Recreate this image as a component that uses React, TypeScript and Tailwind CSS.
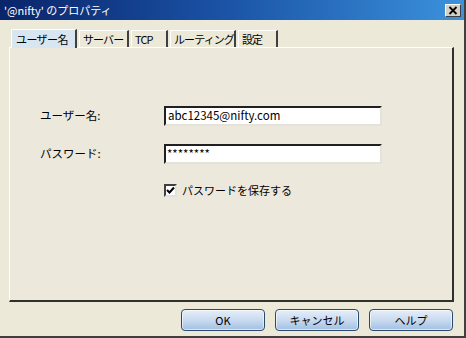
import React from "react";

const font = { fontFamily: '"Noto Sans CJK JP", "Liberation Sans", sans-serif' };

function Tab({ label, selected, w }: { label: string; selected?: boolean; w: string }) {
  if (selected) {
    return (
      <div className={`relative z-10 -mb-[1px] ml-[2px] flex h-[19px] shrink-0 items-center whitespace-nowrap border-l border-t border-l-white border-t-white border-r-2 border-r-[#404040] bg-[#d8e6f2] pl-[4px] text-[11px] leading-none tracking-[-0.6px] text-black ${w}`}>
        {label}
      </div>
    );
  }
  return (
    <div className={`flex h-[17px] shrink-0 items-center whitespace-nowrap border-l border-t border-l-white border-t-white border-r-2 border-r-[#404040] pl-[3px] text-[11px] leading-none tracking-[-0.9px] text-black ${w}`}>
      {label}
    </div>
  );
}

function Btn({ label }: { label: string }) {
  return (
    <div className="flex h-[22px] w-[84px] items-center justify-center rounded-[4px] border border-[#2c4a6e] bg-gradient-to-b from-[#e6eef9] via-[#c9dbf0] to-[#a3bfe2] text-[11px] leading-none text-black shadow-[inset_0_0_0_1px_rgba(255,255,255,0.6)]">
      {label}
    </div>
  );
}

export default function App() {
  return (
    <div
      className="flex h-[338px] w-[466px] flex-col overflow-hidden border-b-2 border-r-2 border-b-[#404040] border-r-[#404040] bg-[#ece9d8]"
      style={font}
    >
      {/* Title bar */}
      <div className="flex h-[20px] shrink-0 items-center justify-between bg-gradient-to-r from-[#0a246a] via-[#1c55a8] to-[#3c92dc] pl-[4px] pr-[3px]">
        <span className="text-[11px] leading-none text-white">'@nifty' のプロパティ</span>
        <div className="flex h-[13px] w-[16px] items-center justify-center border border-b-[#404040] border-l-white border-r-[#404040] border-t-white bg-[#d4d0c8]">
          <svg width="10" height="9" viewBox="0 0 10 9">
            <path d="M1.5 1 L8.5 8 M8.5 1 L1.5 8" stroke="#000" strokeWidth="1.8" />
          </svg>
        </div>
      </div>

      {/* Body */}
      <div className="flex flex-1 flex-col pl-[9px] pr-[10px] pt-[9px]">
        {/* Tabs */}
        <div className="flex h-[18px] items-end gap-[2px]">
          <Tab label="ユーザー名" selected w="w-[66px]" />
          <Tab label="サーバー" w="w-[50px]" />
          <Tab label="TCP" w="w-[37px]" />
          <Tab label="ルーティング" w="w-[66px]" />
          <Tab label="設定" w="w-[40px]" />
        </div>

        {/* Panel */}
        <div className="h-[255px] border-b-2 border-l border-r-2 border-t border-b-[#303030] border-l-white border-r-[#303030] border-t-white bg-[#ece8dc]">
          <div className="grid grid-cols-[124px_218px] items-center gap-y-[18px] pl-[30px] pt-[58px]">
            <div className="text-[11.5px] leading-none text-black">ユーザー名:</div>
            <div className="flex h-[20px] items-center border-2 border-b-[#e4e2da] border-l-[#202020] border-r-[#e4e2da] border-t-[#202020] bg-white pl-[2px] text-[11.5px] leading-none text-black">
              abc12345@nifty.com
            </div>
            <div className="text-[11.5px] leading-none text-black">パスワード:</div>
            <div className="flex h-[20px] items-center border-2 border-b-[#e4e2da] border-l-[#202020] border-r-[#e4e2da] border-t-[#202020] bg-white pl-[1px] text-[11.5px] leading-none text-black">
              ********
            </div>
            <div />
            <div className="mt-[2px] flex items-center gap-[5px]">
              <div className="flex h-[13px] w-[13px] items-center justify-center border-2 border-b-[#e4e2da] border-l-[#404040] border-r-[#e4e2da] border-t-[#404040] bg-white">
                <svg width="9" height="9" viewBox="0 0 9 9">
                  <path d="M1 4 L3.5 6.5 L8 1.5" stroke="#000" strokeWidth="2" fill="none" />
                </svg>
              </div>
              <span className="text-[11px] leading-none text-black">パスワードを保存する</span>
            </div>
          </div>
        </div>

        {/* Buttons */}
        <div className="mt-[7px] flex justify-end gap-[10px] pr-[1px]">
          <Btn label="OK" />
          <Btn label="キャンセル" />
          <Btn label="ヘルプ" />
        </div>
      </div>
    </div>
  );
}
